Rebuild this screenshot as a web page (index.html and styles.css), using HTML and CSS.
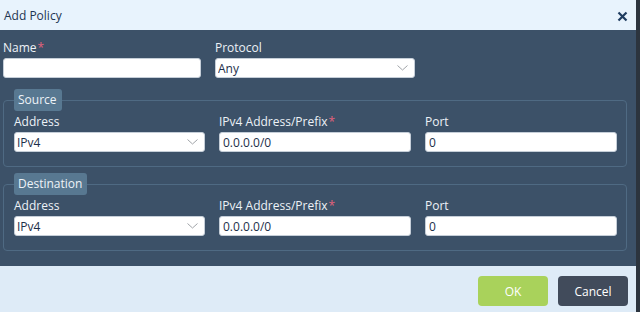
FILE: index.html
```html
<!DOCTYPE html>
<html lang="en">
<head>
    <meta charset="UTF-8">
    <meta name="viewport" content="width=device-width, initial-scale=1.0">
    <title>Add Policy</title>
    <link rel="stylesheet" href="styles.css">
</head>
<body>
    <div class="dialog">
        <div class="dialog-header">
            <span class="title">Add Policy</span>
            <button class="close" type="button" aria-label="Close">
                <svg width="11" height="11" viewBox="0 0 11 11"><path d="M1.5 1.5 L9.5 9.5 M9.5 1.5 L1.5 9.5" stroke="#1f3c60" stroke-width="2.2" fill="none"/></svg>
            </button>
        </div>

        <div class="dialog-body">
            <div class="top-row">
                <div class="field name-field">
                    <label>Name<span class="req">*</span></label>
                    <input type="text" value="">
                </div>
                <div class="field proto-field">
                    <label>Protocol</label>
                    <div class="select-wrap">
                        <select><option>Any</option></select>
                        <svg class="chevron" width="11" height="6" viewBox="0 0 11 6"><path d="M0.5 0.5 L5.5 5 L10.5 0.5" stroke="#a0a4a8" fill="none"/></svg>
                    </div>
                </div>
            </div>

            <fieldset class="group">
                <legend>Source</legend>
                <div class="grid-row">
                    <div class="field">
                        <label>Address</label>
                        <div class="select-wrap">
                            <select><option>IPv4</option></select>
                            <svg class="chevron" width="11" height="6" viewBox="0 0 11 6"><path d="M0.5 0.5 L5.5 5 L10.5 0.5" stroke="#a0a4a8" fill="none"/></svg>
                        </div>
                    </div>
                    <div class="field">
                        <label>IPv4 Address/Prefix<span class="req">*</span></label>
                        <input type="text" value="0.0.0.0/0">
                    </div>
                    <div class="field">
                        <label>Port</label>
                        <input type="text" value="0">
                    </div>
                </div>
            </fieldset>

            <fieldset class="group">
                <legend>Destination</legend>
                <div class="grid-row">
                    <div class="field">
                        <label>Address</label>
                        <div class="select-wrap">
                            <select><option>IPv4</option></select>
                            <svg class="chevron" width="11" height="6" viewBox="0 0 11 6"><path d="M0.5 0.5 L5.5 5 L10.5 0.5" stroke="#a0a4a8" fill="none"/></svg>
                        </div>
                    </div>
                    <div class="field">
                        <label>IPv4 Address/Prefix<span class="req">*</span></label>
                        <input type="text" value="0.0.0.0/0">
                    </div>
                    <div class="field">
                        <label>Port</label>
                        <input type="text" value="0">
                    </div>
                </div>
            </fieldset>
        </div>

        <div class="dialog-footer">
            <button class="btn btn-ok" type="button">OK</button>
            <button class="btn btn-cancel" type="button">Cancel</button>
        </div>
    </div>
</body>
</html>
```

FILE: styles.css
```css
html, body {
    margin: 0;
    padding: 0;
}
body {
    font-family: "Open Sans", "DejaVu Sans", sans-serif;
    font-size: 12px;
    background-color: #2c343e;
    width: 640px;
    height: 312px;
    overflow: hidden;
}
.dialog {
    width: 636px;
    height: 312px;
    display: flex;
    flex-direction: column;
    background-color: #3c5168;
}
.dialog-header {
    height: 30px;
    flex: none;
    display: flex;
    align-items: center;
    justify-content: space-between;
    padding: 0 8px 0 4px;
    background-color: #e8f3fd;
    color: #1d3552;
}
.title {
    font-size: 12px;
    line-height: 16px;
    margin-top: 1px;
}
.close {
    border: 0;
    background: none;
    padding: 0;
    width: 12px;
    height: 12px;
    display: flex;
    align-items: center;
    justify-content: center;
    margin-top: 2px;
}
.dialog-body {
    flex: 1;
    padding: 10px 9px 0 3px;
}
.top-row {
    display: flex;
    gap: 14px;
}
.name-field {
    width: 198px;
}
.proto-field {
    width: 200px;
}
.field {
    display: flex;
    flex-direction: column;
}
.field label {
    color: #edf2f7;
    line-height: 16px;
    height: 16px;
    margin-bottom: 2px;
    white-space: nowrap;
}
.req {
    color: #e3617c;
    margin-left: 1px;
}
input, select {
    font-family: "Open Sans", "DejaVu Sans", sans-serif;
    font-size: 12px;
    color: #1d2f4a;
    height: 20px;
    box-sizing: border-box;
    border: 1px solid #c5ced8;
    border-radius: 3px;
    background-color: #fff;
    padding: 0 3px;
    margin: 0;
    width: 100%;
    outline: none;
}
select {
    appearance: none;
    -webkit-appearance: none;
    padding-left: 2px;
}
.select-wrap {
    position: relative;
}
.chevron {
    position: absolute;
    right: 7px;
    top: 7px;
}
.group {
    margin: 11px 0 0 0;
    padding: 3px 10px 14px 10px;
    border: 1px solid #4f6a83;
    border-radius: 4px;
    min-width: 0;
}
.group + .group {
    margin-top: 6px;
}
.group legend {
    background-color: #587891;
    color: #eef3f8;
    height: 22px;
    line-height: 22px;
    padding: 0 5px 0 4px;
    border-radius: 3px;
    margin-left: 0;
}
.grid-row {
    display: grid;
    grid-template-columns: 191px 192px 192px;
    column-gap: 14px;
}
.dialog-footer {
    height: 46px;
    flex: none;
    box-sizing: border-box;
    display: flex;
    justify-content: flex-end;
    align-items: flex-start;
    gap: 10px;
    padding: 10px 8px 0 0;
    background-color: #deebf7;
}
.btn {
    width: 70px;
    height: 30px;
    border: 0;
    border-radius: 4px;
    font-family: "Open Sans", "DejaVu Sans", sans-serif;
    font-size: 12px;
    color: #ffffff;
}
.btn-ok {
    background-color: #a9d25b;
}
.btn-cancel {
    background-color: #414b5b;
}
```
